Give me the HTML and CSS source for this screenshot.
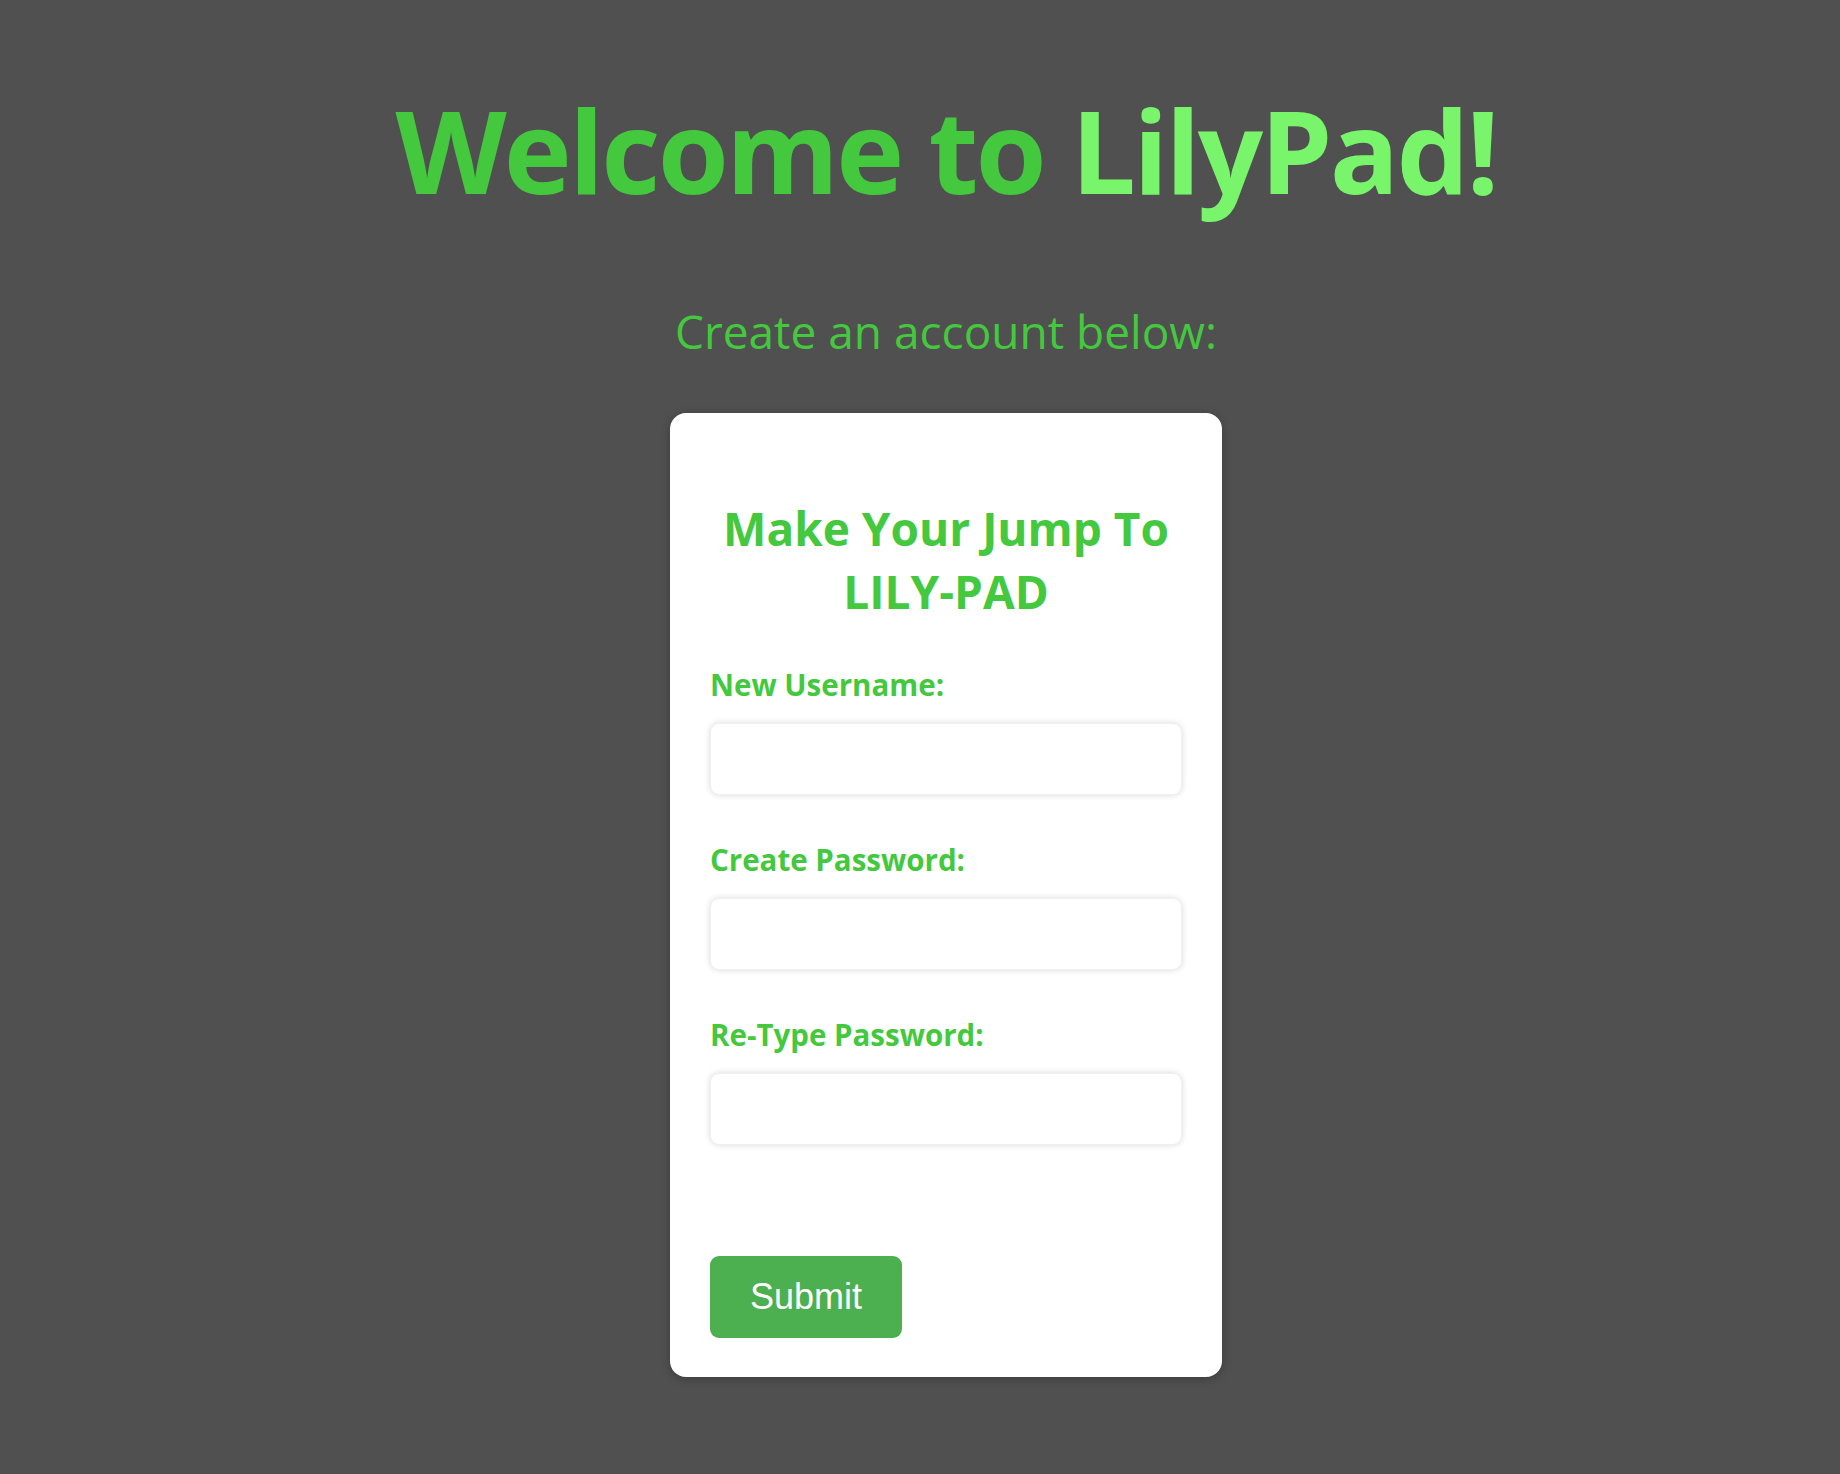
FILE: index.html
```html
<!DOCTYPE html>
<html lang="en">
<head>
<meta charset="utf-8">
<title>LilyPad - Sign Up</title>
<link rel="stylesheet" href="styles.css">
</head>
<body>
<main class="page">
  <h1 class="title"><span class="title-dark">Welcome to</span> <span class="title-light">LilyPad!</span></h1>
  <p class="subtitle">Create an account below:</p>
  <form class="card">
    <h2 class="card-title">Make Your Jump To LILY-PAD</h2>
    <label class="field-label" for="username">New Username:</label>
    <input class="field-input" id="username" type="text">
    <label class="field-label" for="password">Create Password:</label>
    <input class="field-input" id="password" type="password">
    <label class="field-label" for="password2">Re-Type Password:</label>
    <input class="field-input" id="password2" type="password">
    <div class="actions">
      <button class="submit" type="button">Submit</button>
    </div>
  </form>
</main>
</body>
</html>
```

FILE: styles.css
```css
html, body {
  margin: 0;
  padding: 0;
  background: #505050;
}
body {
  font-family: "Open Sans", "Noto Sans", sans-serif;
}
.page {
  display: flex;
  flex-direction: column;
  align-items: center;
  padding: 80px 0 0 52px;
  min-height: 1394px;
}
.title {
  margin: 0;
  font-size: 115px;
  line-height: 140px;
  font-weight: 700;
  letter-spacing: -2.8px;
  white-space: nowrap;
}
.title-dark { color: #44c83e; }
.title-light { color: #78f56a; }
.subtitle {
  margin: 81px 0 0;
  font-size: 46px;
  line-height: 60px;
  font-weight: 400;
  color: #44c83e;
}
.card {
  margin-top: 52px;
  width: 472px;
  padding: 40px 40px 39px;
  background: #ffffff;
  border-radius: 16px;
  box-shadow: 0 2px 10px rgba(0,0,0,0.25);
  display: flex;
  flex-direction: column;
}
.card-title {
  margin: 44px 0 42px;
  text-align: center;
  font-size: 46px;
  line-height: 63px;
  font-weight: 700;
  color: #44c83e;
}
.field-label {
  font-size: 29.5px;
  line-height: 40px;
  font-weight: 700;
  color: #44c83e;
  margin-bottom: 18px;
}
.field-input {
  box-sizing: border-box;
  width: 472px;
  height: 72px;
  margin: 0 0 45px;
  border: 1px solid #f0f0f0;
  border-radius: 9px;
  background: #fff;
  box-shadow: 0 0 6px rgba(0,0,0,0.15);
  font-size: 24px;
  padding: 0 16px;
}
.actions {
  margin-top: 66px;
}
.submit {
  display: block;
  width: 192px;
  height: 82px;
  border: none;
  border-radius: 9px;
  background: #4caf50;
  color: #ffffff;
  font-family: "Liberation Sans", Arial, sans-serif;
  font-size: 36px;
  cursor: pointer;
}
```
